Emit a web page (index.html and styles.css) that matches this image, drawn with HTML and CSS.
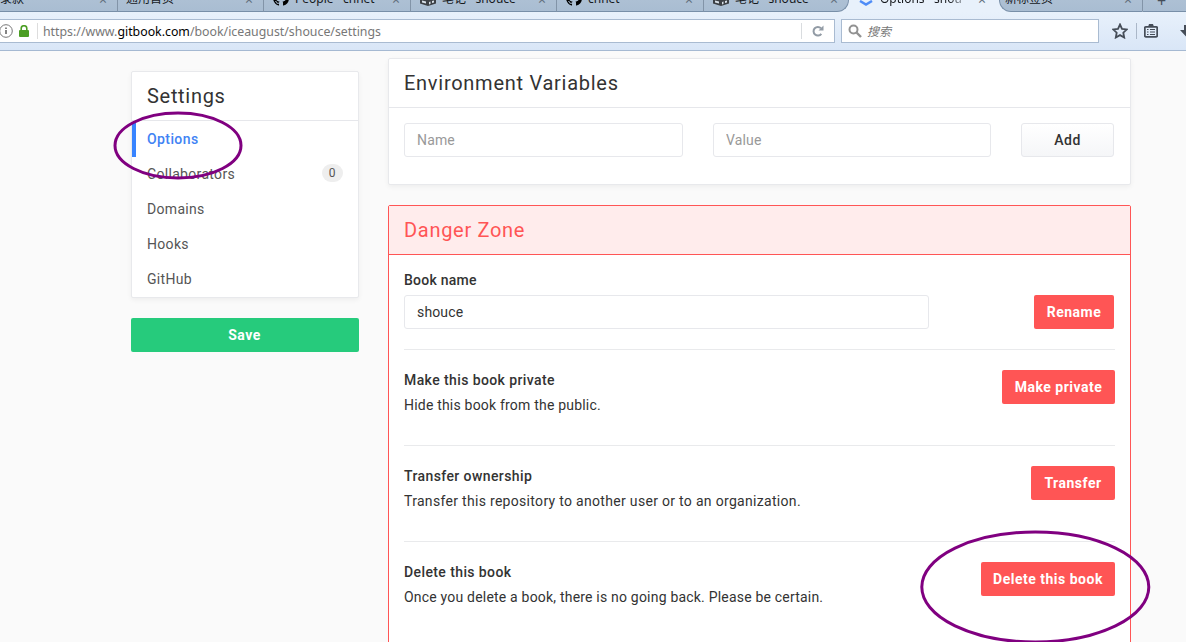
FILE: index.html
```
<!DOCTYPE html>
<html lang="en">
<head>
<meta charset="utf-8">
<title>Options · shouce</title>
<link rel="stylesheet" href="styles.css">
</head>
<body>
<svg class="defs" width="0" height="0" aria-hidden="true">
  <symbol id="github" viewBox="0 0 16 16"><path d="M8 0C3.58 0 0 3.58 0 8c0 3.54 2.29 6.53 5.47 7.59.4.07.55-.17.55-.38v-1.49c-2.01.37-2.53-.49-2.69-.94-.09-.23-.48-.94-.82-1.13-.28-.15-.68-.52-.01-.53.63-.01 1.08.58 1.23.82.72 1.21 1.87.87 2.33.66.07-.52.28-.87.51-1.07-1.78-.2-3.64-.89-3.64-3.95 0-.87.31-1.59.82-2.15-.08-.2-.36-1.02.08-2.12 0 0 .67-.21 2.2.82a7.4 7.4 0 0 1 4 0c1.53-1.04 2.2-.82 2.2-.82.44 1.1.16 1.92.08 2.12.51.56.82 1.27.82 2.15 0 3.07-1.87 3.75-3.65 3.95.29.25.54.73.54 1.48v2.2c0 .21.15.46.55.38A8 8 0 0 0 16 8c0-4.42-3.58-8-8-8z"/></symbol>
  <symbol id="book" viewBox="0 0 16 16"><path d="M0 3l8 3 8-3v10.500l-8 2.500-8-2.500z" fill="#3c4045"/><path d="M2 10.500l4 1v2l-4-1zM9 12l1.500-.5v2.500l-1.500.5zM12 11l2-.5v2l-2 .5z" fill="#d8e0e8"/></symbol>
</svg>
<header class="browser">
  <nav class="tabs">
    <div class="tab tab-first"><span class="label">录款</span><span class="close">×</span></div>
    <div class="tab"><span class="label">通用首页</span><span class="close">×</span></div>
    <div class="tab"><svg class="fav"><use href="#github"/></svg><span class="label">People · chnet</span><span class="close">×</span></div>
    <div class="tab"><svg class="fav"><use href="#book"/></svg><span class="label">笔记 · shouce</span><span class="close">×</span></div>
    <div class="tab"><svg class="fav"><use href="#github"/></svg><span class="label">chnet</span><span class="close">×</span></div>
    <div class="tab tab-before"><svg class="fav"><use href="#book"/></svg><span class="label">笔记 · shouce</span><span class="close">×</span></div>
    <div class="tab tab-active"><svg class="fav" viewBox="0 0 16 16"><path d="M2 10l6 3.500 6-3.500" fill="none" stroke="#4e8cf7" stroke-width="2.500"/></svg><span class="label">Options · shou</span><span class="close">×</span></div>
    <div class="tab tab-after"><span class="label">新标签页</span><span class="close">×</span></div>
    <div class="tab tab-new"><span class="plus">+</span></div>
  </nav>
  <div class="toolbar">
    <div class="address">
      <svg class="info" viewBox="0 0 14 14"><circle cx="6" cy="7" r="6.300" fill="none" stroke="#777"/><path d="M6 6v4M6 3.500v1.500" stroke="#666" stroke-width="1.600"/></svg>
      <svg class="lock" viewBox="0 0 10 12"><path d="M2.200 6V3.500a2.800 2.800 0 0 1 5.600 0V6" fill="none" stroke="#4c9e24" stroke-width="1.600"/><rect y="5" width="10" height="7" rx="1" fill="#4c9e24"/></svg>
      <span class="url">https://www.<b>gitbook.com</b>/book/iceaugust/shouce/settings</span>
      <span class="reload"><svg viewBox="0 0 12 12"><path d="M9.300 8.800a4.300 4.300 0 1 1-.3-5.500" fill="none" stroke="#929ba5" stroke-width="2"/><path d="M11.500.5v5h-5z" fill="#929ba5"/></svg></span>
    </div>
    <div class="search"><svg viewBox="0 0 14 14"><circle cx="5.500" cy="5.500" r="4" fill="none" stroke="#929292" stroke-width="2"/><path d="M8.500 8.500l4.500 4.500" stroke="#929292" stroke-width="2.400"/></svg><span>搜索</span></div>
    <div class="tools">
      <svg class="star" viewBox="0 0 16 16"><path d="M8 1.500l2 4.300 4.800.6-3.500 3.300.9 4.800L8 12.100l-4.200 2.400.9-4.800L1.200 6.400 6 5.800z" fill="none" stroke="#454d58" stroke-width="1.800"/></svg>
      <span class="clip"><svg viewBox="0 0 14 15"><path d="M1.800 3.800h10.400a1 1 0 0 1 1 1v8a1 1 0 0 1-1 1H1.800a1 1 0 0 1-1-1v-8a1 1 0 0 1 1-1z" fill="none" stroke="#454d58" stroke-width="1.800"/><path d="M4 4l1-3h4l1 3z" fill="#454d58"/><path d="M3 6.500h1.500M6 6.500h5M3 9h1.500M6 9h5M3 11.500h1.500M6 11.500h5" stroke="#454d58" stroke-width="1.200"/></svg></span>
      <svg class="down" viewBox="0 0 7 14"><path d="M4 1h6v5h3l-6.500 7L0 6h4z" fill="#454d58"/></svg>
    </div>
  </div>
</header>
<main class="page">
  <aside class="side">
    <section class="panel">
      <h2 class="side-title">Settings</h2>
      <ul class="menu">
        <li class="current">Options</li>
        <li>Collaborators<span class="badge">0</span></li>
        <li>Domains</li>
        <li>Hooks</li>
        <li>GitHub</li>
      </ul>
    </section>
    <button class="btn save">Save</button>
  </aside>
  <div class="content">
    <section class="panel env">
      <h2 class="title">Environment Variables</h2>
      <div class="env-row">
        <input class="field" placeholder="Name">
        <input class="field" placeholder="Value">
        <button class="btn add">Add</button>
      </div>
    </section>
    <section class="danger">
      <h2 class="title">Danger Zone</h2>
      <div class="danger-body">
        <div class="item rename"><div class="text"><h3>Book name</h3><input class="field" value="shouce"></div><button class="btn red">Rename</button></div>
        <div class="item"><div class="text"><h3>Make this book private</h3><p>Hide this book from the public.</p></div><button class="btn red private">Make private</button></div>
        <div class="item"><div class="text"><h3>Transfer ownership</h3><p class="wide">Transfer this repository to another user or to an organization.</p></div><button class="btn red transfer">Transfer</button></div>
        <div class="item"><div class="text"><h3>Delete this book</h3><p>Once you delete a book, there is no going back. Please be certain.</p></div><button class="btn red delete">Delete this book</button></div>
      </div>
    </section>
  </div>
</main>
<svg class="marks" viewBox="0 0 1186 642"><ellipse cx="178" cy="145.500" rx="63" ry="32.500"/><ellipse cx="1035.300" cy="587" rx="113.500" ry="55"/></svg>
</body>
</html>
```
FILE: styles.css
```
* { box-sizing: border-box; }
body { margin: 0; height: 642px; overflow: hidden; position: relative; background: #fafafa; font-family: Roboto, sans-serif; font-size: 14px; letter-spacing: .4px; color: #333; }
h2, h3, p, ul { margin: 0; padding: 0; font-weight: 400; }
.defs { display: block; height: 0; }
.browser { height: 51px; border-bottom: 1px solid #a5b9d2; background: linear-gradient(#e8f1fb 12px, #d9e6f7); font-family: "Noto Sans", "Noto Sans CJK SC", sans-serif; letter-spacing: 0; }
.tabs { height: 12px; display: grid; grid-template-columns: 118px 146px 147px 146px 147px 145px 150px 144px 1fr; overflow: hidden; }
.tab { display: flex; align-items: flex-end; height: 12px; padding: 0 10px 0 8px; background: linear-gradient(#adc0d4, #a9bdd2); border-bottom: 1px solid #788fa8; border-right: 1px solid #8294a8; font-size: 12px; color: #16191d; overflow: hidden; }
.tab .label { line-height: 18px; height: 18px; margin-bottom: 3px; white-space: nowrap; }
.tab .fav { width: 16px; height: 16px; margin: 0 6px 5px 1px; flex: none; }
.tab .close { margin-left: auto; height: 14px; line-height: 14px; margin-bottom: 4px; font-size: 14px; color: #626e7c; }
.tab-first { padding-left: 0; }
.tab-before { border-right: 1px solid #788fa8; border-bottom-right-radius: 12px; }
.tab-active { background: #e8f1fb; border: 0; padding-right: 13px; }
.tab-active .label { width: 91px; margin-bottom: 4px; overflow: hidden; -webkit-mask-image: linear-gradient(90deg, #000 75%, transparent); }
.tab-active .close { margin-bottom: 5px; }
.tab-after { border-left: 1px solid #788fa8; border-bottom-left-radius: 12px; padding-left: 5px; }
.tab-new { border-right: 0; padding-left: 14px; }
.tab-new .plus { height: 18px; line-height: 18px; margin-bottom: 1px; font-size: 16px; color: #454d58; }
.toolbar { display: grid; grid-template-columns: 835px 258px 1fr; column-gap: 6px; padding-top: 7px; }
.address, .search { height: 24px; display: flex; align-items: center; background: #fff; border: 1px solid #a9bbd1; }
.address { border-left: 0; }
.info { width: 14px; height: 14px; flex: none; }
.lock { width: 10px; height: 12px; margin-left: 5px; }
.url { margin-left: 8px; padding: 1px 0 0 5px; border-left: 1px solid #ddd; height: 16px; line-height: 16px; font-size: 12.330px; color: #777; flex: 1; }
.url b { font-weight: 400; color: #000; }
.reload { width: 33px; height: 16px; border-left: 1px solid #d9dcdf; display: flex; align-items: center; justify-content: center; }
.reload svg { width: 12px; height: 12px; }
.search { padding-left: 6px; font-size: 12px; font-style: italic; color: #777; }
.search svg { width: 14px; height: 14px; margin-right: 5px; }
.tools { display: flex; align-items: center; padding-left: 7px; }
.star { width: 16px; height: 16px; flex: none; }
.clip { display: flex; height: 16px; margin-left: 8px; padding-left: 7px; border-left: 1px solid #aab7c8; }
.clip svg { width: 14px; height: 15px; }
.down { width: 7px; height: 14px; margin-left: 22px; flex: none; }

.page { display: grid; grid-template-columns: 228px 743px; column-gap: 29px; height: 591px; overflow: hidden; padding: 0 0 0 131px; }
.side { padding-top: 20px; }
.content { padding-top: 7px; }
.panel { background: #fff; border: 1px solid #e8e9ec; border-radius: 2px; box-shadow: 0 2px 5px rgba(0,0,0,.05); }
.side-title { height: 49px; padding-left: 15px; line-height: 48px; font-size: 20px; letter-spacing: .7px; border-bottom: 1px solid #e6e7eb; }
.menu { list-style: none; padding: 1px 0 0; }
.menu li { height: 35px; line-height: 35px; padding: 0 15px; display: flex; align-items: center; justify-content: space-between; color: #555; letter-spacing: .32px; }
.menu .current { color: #4183f4; font-weight: 500; border-left: 4px solid #3884ff; padding-left: 11px; letter-spacing: .4px; }
.menu .badge { width: 21px; height: 18px; line-height: 18px; margin-bottom: 3px; padding-right: 1px; border-radius: 9px; background: #eee; font-size: 12px; text-align: center; letter-spacing: 0; }
.btn { height: 34px; padding: 0; border: 0; border-radius: 2px; font: 500 14px Roboto, sans-serif; letter-spacing: .5px; color: #fff; white-space: nowrap; }
.save { display: block; width: 228px; margin-top: 20px; padding-right: 1px; background: #26cb7c; font-weight: 700; }
.title { height: 49px; padding-left: 15px; line-height: 49px; font-size: 20px; letter-spacing: .73px; border-bottom: 1px solid #e6e7eb; }
.env { height: 127px; }
.env-row { display: grid; grid-template-columns: 279px 278px 93px; column-gap: 30px; padding: 15px; }
.field { width: 100%; height: 34px; padding: 0 12px; border: 1px solid #e7e8ec; border-radius: 3px; background: #fff; font: 14px Roboto, sans-serif; letter-spacing: .15px; color: #333; }
.field::placeholder { color: #999; }
.add { border: 1px solid #e7e8ec; border-radius: 3px; background: linear-gradient(#fff, #f5f6f8); color: #333; }
.danger { height: 500px; margin-top: 20px; background: #fff; border: 1px solid #ff5555; border-radius: 2px; }
.danger .title { background: #ffecec; border-color: #ff5555; color: #ff5555; letter-spacing: .7px; }
.danger-body { padding: 0 15px; }
.item { display: flex; justify-content: space-between; height: 96px; padding-top: 20px; border-bottom: 1px solid #e9eaec; }
.item:last-child { border-bottom: 0; }
.item h3 { margin-top: -2px; height: 25px; line-height: 25px; font-size: 14px; font-weight: 500; letter-spacing: .4px; }
.item p { line-height: 25px; letter-spacing: .2px; }
.item .wide { letter-spacing: .31px; }
.rename { height: 95px; padding-top: 15px; }
.rename .text { width: 525px; }
.rename .btn { width: 80px; margin: 25px 1px 0 0; }
.rename h3 { margin: -2px 0 2px; letter-spacing: .25px; }
.red { background: #ff5555; font-weight: 700; }
.private { width: 113px; }
.transfer { width: 84px; }
.delete { width: 134px; }
.marks { position: absolute; inset: 0; width: 1186px; height: 642px; pointer-events: none; fill: none; stroke: #800080; stroke-width: 3; }
```
